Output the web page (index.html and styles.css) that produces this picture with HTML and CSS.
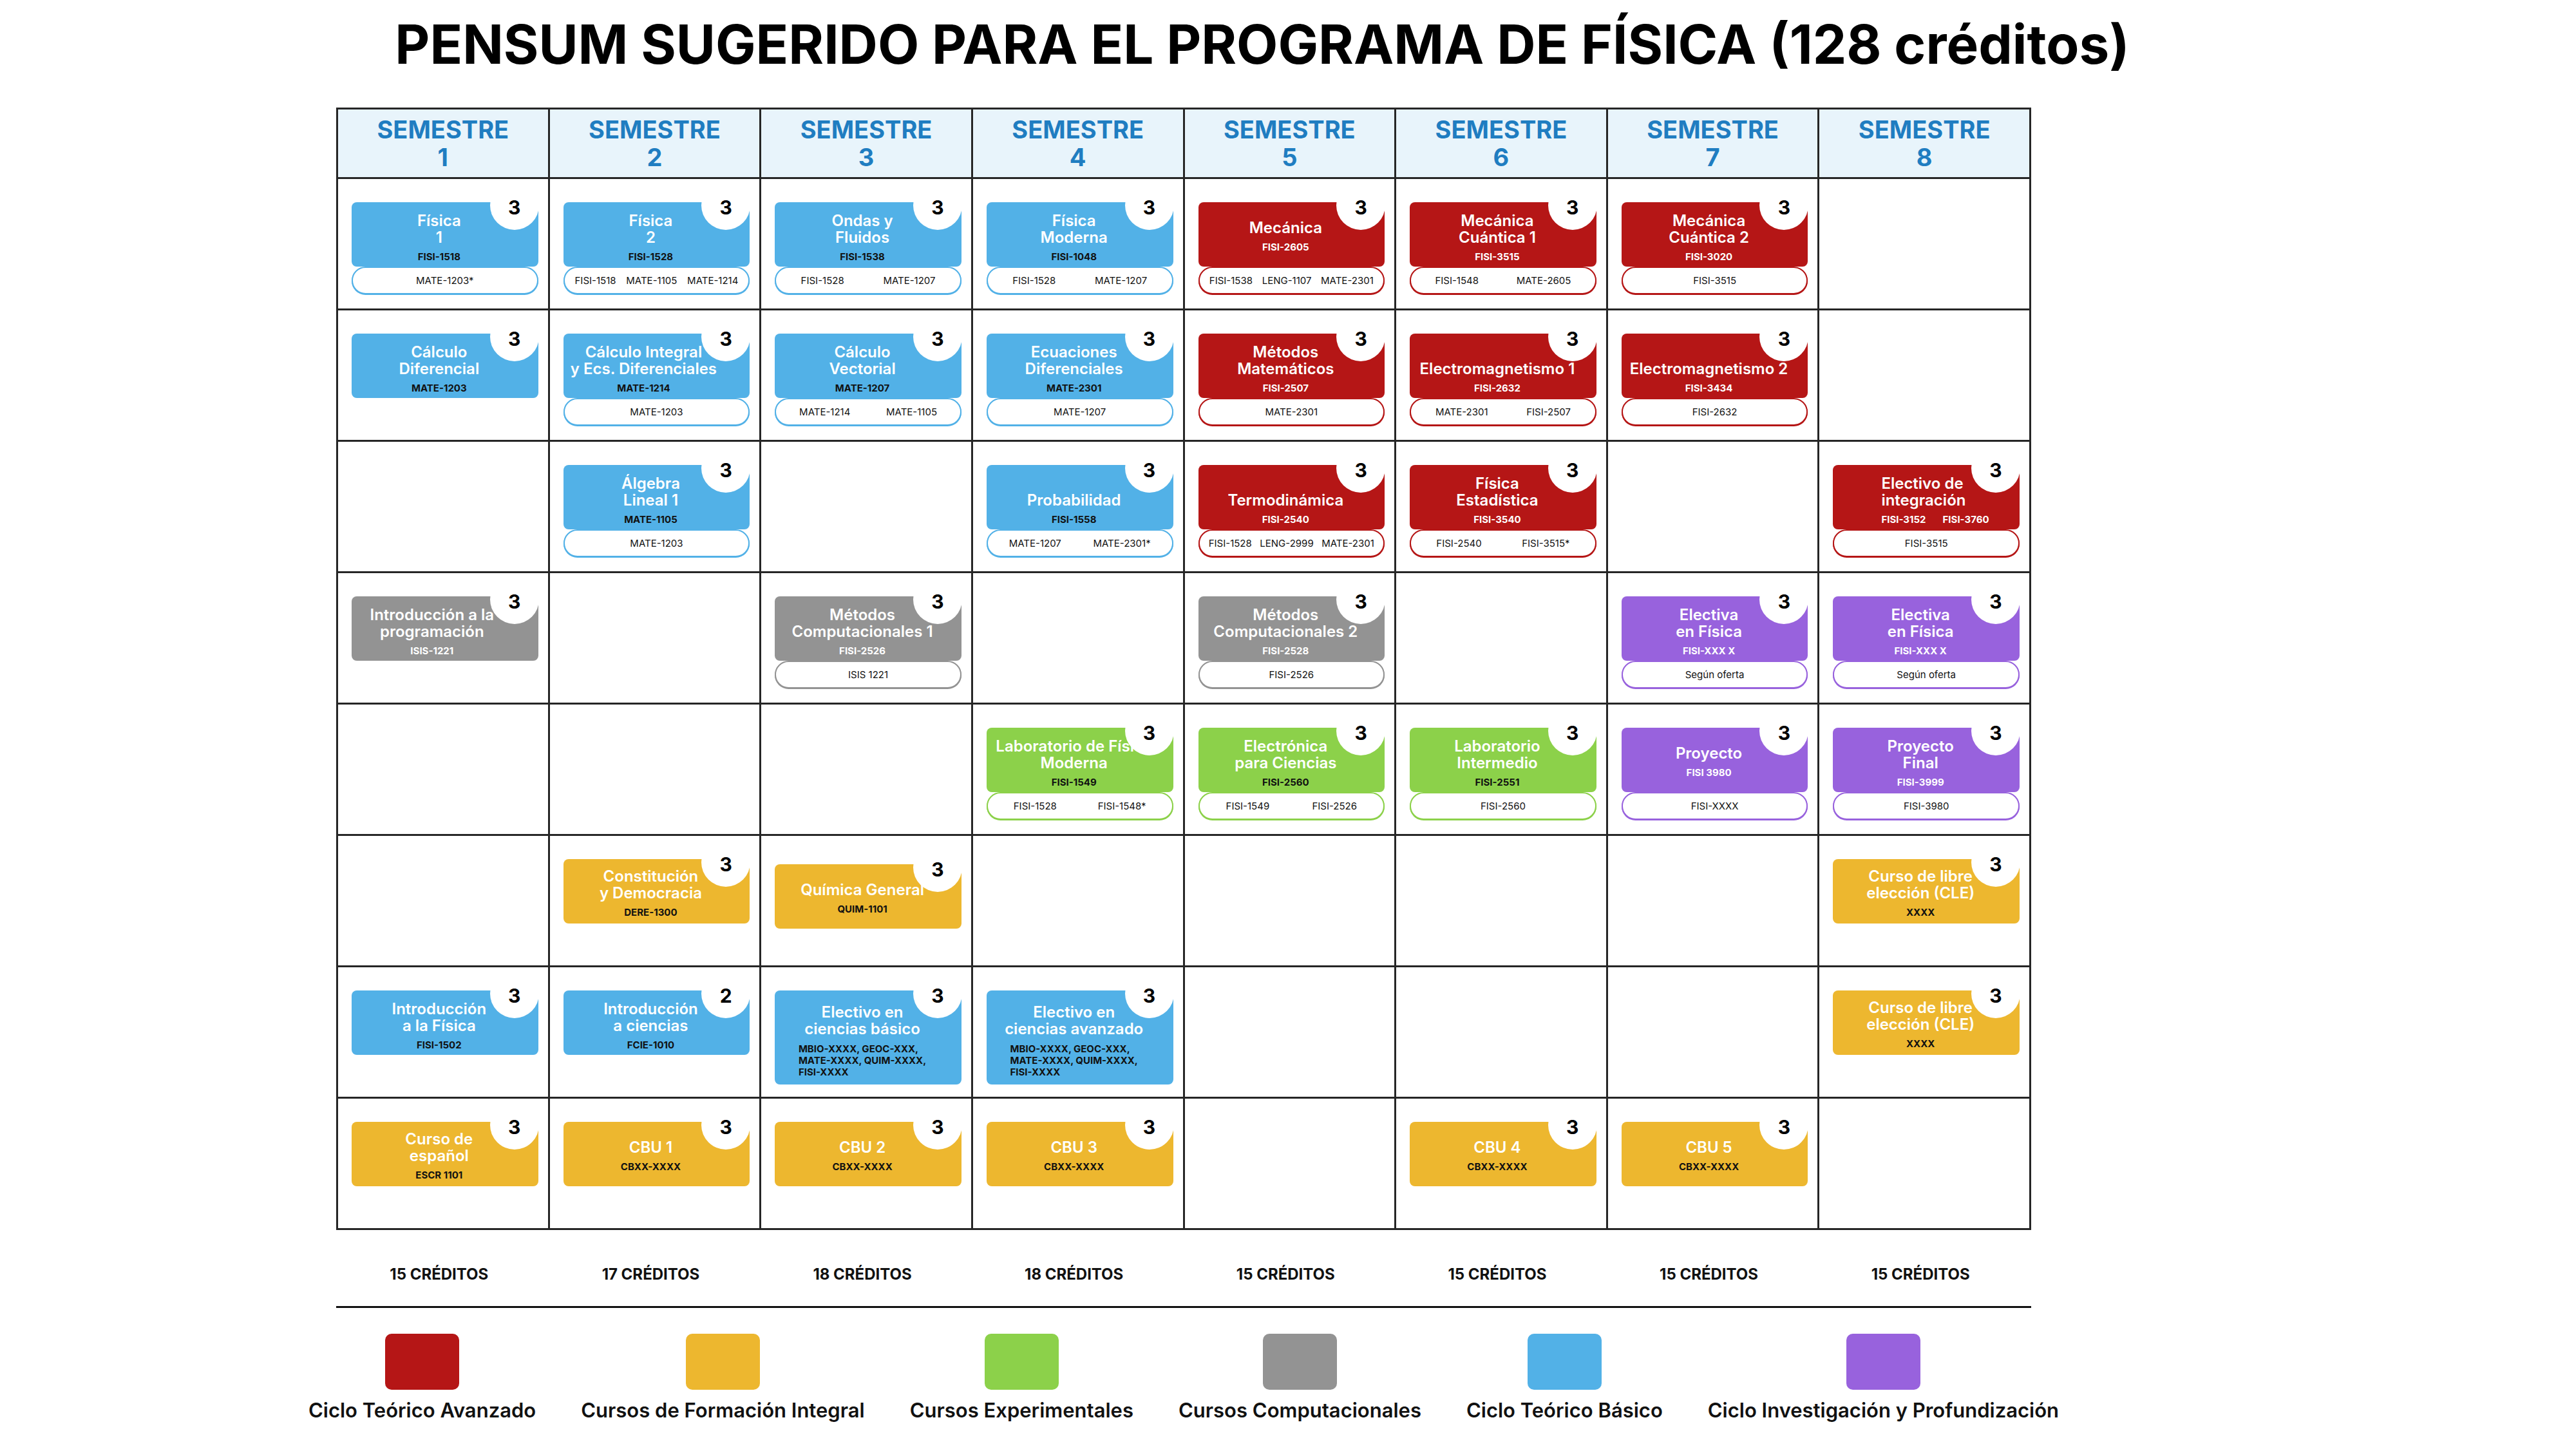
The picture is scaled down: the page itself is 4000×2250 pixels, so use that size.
FILE: index.html
```html
<!DOCTYPE html>
<html lang="es">
<head>
<meta charset="utf-8">
<title>Pensum sugerido para el programa de Física</title>
<link rel="stylesheet" href="styles.css">
</head>
<body>
<main class="page">
  <h1 class="title">PENSUM SUGERIDO PARA EL PROGRAMA DE FÍSICA (128 créditos)</h1>
  <section class="plan">
    <div class="grid">
      <div class="head">SEMESTRE<br>1</div>
      <div class="head">SEMESTRE<br>2</div>
      <div class="head">SEMESTRE<br>3</div>
      <div class="head">SEMESTRE<br>4</div>
      <div class="head">SEMESTRE<br>5</div>
      <div class="head">SEMESTRE<br>6</div>
      <div class="head">SEMESTRE<br>7</div>
      <div class="head">SEMESTRE<br>8</div>

      <!-- Row 1 -->
      <div class="cell"><div class="course course--blue"><div class="course__box"><span class="course__credits">3</span><p class="course__name">Física<br>1</p><p class="course__code">FISI-1518</p></div><div class="course__prereq"><span>MATE-1203*</span></div></div></div>
      <div class="cell"><div class="course course--blue"><div class="course__box"><span class="course__credits">3</span><p class="course__name">Física<br>2</p><p class="course__code">FISI-1528</p></div><div class="course__prereq"><span>FISI-1518</span><span>MATE-1105</span><span>MATE-1214</span></div></div></div>
      <div class="cell"><div class="course course--blue"><div class="course__box"><span class="course__credits">3</span><p class="course__name">Ondas y<br>Fluidos</p><p class="course__code">FISI-1538</p></div><div class="course__prereq"><span>FISI-1528</span><span>MATE-1207</span></div></div></div>
      <div class="cell"><div class="course course--blue"><div class="course__box"><span class="course__credits">3</span><p class="course__name">Física<br>Moderna</p><p class="course__code">FISI-1048</p></div><div class="course__prereq"><span>FISI-1528</span><span>MATE-1207</span></div></div></div>
      <div class="cell"><div class="course course--red course--mid"><div class="course__box"><span class="course__credits">3</span><p class="course__name">Mecánica</p><p class="course__code">FISI-2605</p></div><div class="course__prereq"><span>FISI-1538</span><span>LENG-1107</span><span>MATE-2301</span></div></div></div>
      <div class="cell"><div class="course course--red"><div class="course__box"><span class="course__credits">3</span><p class="course__name">Mecánica<br>Cuántica 1</p><p class="course__code">FISI-3515</p></div><div class="course__prereq"><span>FISI-1548</span><span>MATE-2605</span></div></div></div>
      <div class="cell"><div class="course course--red"><div class="course__box"><span class="course__credits">3</span><p class="course__name">Mecánica<br>Cuántica 2</p><p class="course__code">FISI-3020</p></div><div class="course__prereq"><span>FISI-3515</span></div></div></div>
      <div class="cell"></div>

      <!-- Row 2 -->
      <div class="cell"><div class="course course--blue"><div class="course__box"><span class="course__credits">3</span><p class="course__name">Cálculo<br>Diferencial</p><p class="course__code">MATE-1203</p></div></div></div>
      <div class="cell"><div class="course course--blue course--shift"><div class="course__box"><span class="course__credits">3</span><p class="course__name">Cálculo Integral<br>y Ecs. Diferenciales</p><p class="course__code">MATE-1214</p></div><div class="course__prereq"><span>MATE-1203</span></div></div></div>
      <div class="cell"><div class="course course--blue"><div class="course__box"><span class="course__credits">3</span><p class="course__name">Cálculo<br>Vectorial</p><p class="course__code">MATE-1207</p></div><div class="course__prereq"><span>MATE-1214</span><span>MATE-1105</span></div></div></div>
      <div class="cell"><div class="course course--blue"><div class="course__box"><span class="course__credits">3</span><p class="course__name">Ecuaciones<br>Diferenciales</p><p class="course__code">MATE-2301</p></div><div class="course__prereq"><span>MATE-1207</span></div></div></div>
      <div class="cell"><div class="course course--red"><div class="course__box"><span class="course__credits">3</span><p class="course__name">Métodos<br>Matemáticos</p><p class="course__code">FISI-2507</p></div><div class="course__prereq"><span>MATE-2301</span></div></div></div>
      <div class="cell"><div class="course course--red"><div class="course__box"><span class="course__credits">3</span><p class="course__name">Electromagnetismo 1</p><p class="course__code">FISI-2632</p></div><div class="course__prereq"><span>MATE-2301</span><span>FISI-2507</span></div></div></div>
      <div class="cell"><div class="course course--red"><div class="course__box"><span class="course__credits">3</span><p class="course__name">Electromagnetismo 2</p><p class="course__code">FISI-3434</p></div><div class="course__prereq"><span>FISI-2632</span></div></div></div>
      <div class="cell"></div>

      <!-- Row 3 -->
      <div class="cell"></div>
      <div class="cell"><div class="course course--blue"><div class="course__box"><span class="course__credits">3</span><p class="course__name">Álgebra<br>Lineal 1</p><p class="course__code">MATE-1105</p></div><div class="course__prereq"><span>MATE-1203</span></div></div></div>
      <div class="cell"></div>
      <div class="cell"><div class="course course--blue"><div class="course__box"><span class="course__credits">3</span><p class="course__name">Probabilidad</p><p class="course__code">FISI-1558</p></div><div class="course__prereq"><span>MATE-1207</span><span>MATE-2301*</span></div></div></div>
      <div class="cell"><div class="course course--red"><div class="course__box"><span class="course__credits">3</span><p class="course__name">Termodinámica</p><p class="course__code">FISI-2540</p></div><div class="course__prereq"><span>FISI-1528</span><span>LENG-2999</span><span>MATE-2301</span></div></div></div>
      <div class="cell"><div class="course course--red"><div class="course__box"><span class="course__credits">3</span><p class="course__name">Física<br>Estadística</p><p class="course__code">FISI-3540</p></div><div class="course__prereq"><span>FISI-2540</span><span>FISI-3515*</span></div></div></div>
      <div class="cell"></div>
      <div class="cell"><div class="course course--red course--left"><div class="course__box"><span class="course__credits">3</span><p class="course__name">Electivo de<br>integración</p><p class="course__code"><span>FISI-3152</span><span>FISI-3760</span></p></div><div class="course__prereq"><span>FISI-3515</span></div></div></div>

      <!-- Row 4 -->
      <div class="cell"><div class="course course--gray course--shift"><div class="course__box"><span class="course__credits">3</span><p class="course__name">Introducción a la<br>programación</p><p class="course__code">ISIS-1221</p></div></div></div>
      <div class="cell"></div>
      <div class="cell"><div class="course course--gray"><div class="course__box"><span class="course__credits">3</span><p class="course__name">Métodos<br>Computacionales 1</p><p class="course__code">FISI-2526</p></div><div class="course__prereq"><span>ISIS 1221</span></div></div></div>
      <div class="cell"></div>
      <div class="cell"><div class="course course--gray"><div class="course__box"><span class="course__credits">3</span><p class="course__name">Métodos<br>Computacionales 2</p><p class="course__code">FISI-2528</p></div><div class="course__prereq"><span>FISI-2526</span></div></div></div>
      <div class="cell"></div>
      <div class="cell"><div class="course course--purple"><div class="course__box"><span class="course__credits">3</span><p class="course__name">Electiva<br>en Física</p><p class="course__code">FISI-XXX X</p></div><div class="course__prereq"><span>Según oferta</span></div></div></div>
      <div class="cell"><div class="course course--purple"><div class="course__box"><span class="course__credits">3</span><p class="course__name">Electiva<br>en Física</p><p class="course__code">FISI-XXX X</p></div><div class="course__prereq"><span>Según oferta</span></div></div></div>

      <!-- Row 5 -->
      <div class="cell"></div>
      <div class="cell"></div>
      <div class="cell"></div>
      <div class="cell"><div class="course course--green"><div class="course__box"><span class="course__credits">3</span><p class="course__name">Laboratorio de Física<br>Moderna</p><p class="course__code">FISI-1549</p></div><div class="course__prereq"><span>FISI-1528</span><span>FISI-1548*</span></div></div></div>
      <div class="cell"><div class="course course--green"><div class="course__box"><span class="course__credits">3</span><p class="course__name">Electrónica<br>para Ciencias</p><p class="course__code">FISI-2560</p></div><div class="course__prereq"><span>FISI-1549</span><span>FISI-2526</span></div></div></div>
      <div class="cell"><div class="course course--green"><div class="course__box"><span class="course__credits">3</span><p class="course__name">Laboratorio<br>Intermedio</p><p class="course__code">FISI-2551</p></div><div class="course__prereq"><span>FISI-2560</span></div></div></div>
      <div class="cell"><div class="course course--purple course--mid"><div class="course__box"><span class="course__credits">3</span><p class="course__name">Proyecto</p><p class="course__code">FISI 3980</p></div><div class="course__prereq"><span>FISI-XXXX</span></div></div></div>
      <div class="cell"><div class="course course--purple"><div class="course__box"><span class="course__credits">3</span><p class="course__name">Proyecto<br>Final</p><p class="course__code">FISI-3999</p></div><div class="course__prereq"><span>FISI-3980</span></div></div></div>

      <!-- Row 6 -->
      <div class="cell"></div>
      <div class="cell"><div class="course course--yellow"><div class="course__box"><span class="course__credits">3</span><p class="course__name">Constitución<br>y Democracia</p><p class="course__code">DERE-1300</p></div></div></div>
      <div class="cell"><div class="course course--yellow course--low"><div class="course__box"><span class="course__credits">3</span><p class="course__name">Química General</p><p class="course__code">QUIM-1101</p></div></div></div>
      <div class="cell"></div>
      <div class="cell"></div>
      <div class="cell"></div>
      <div class="cell"></div>
      <div class="cell"><div class="course course--yellow"><div class="course__box"><span class="course__credits">3</span><p class="course__name">Curso de libre<br>elección (CLE)</p><p class="course__code">XXXX</p></div></div></div>

      <!-- Row 7 -->
      <div class="cell"><div class="course course--blue"><div class="course__box"><span class="course__credits">3</span><p class="course__name">Introducción<br>a la Física</p><p class="course__code">FISI-1502</p></div></div></div>
      <div class="cell"><div class="course course--blue"><div class="course__box"><span class="course__credits">2</span><p class="course__name">Introducción<br>a ciencias</p><p class="course__code">FCIE-1010</p></div></div></div>
      <div class="cell"><div class="course course--blue course--tall"><div class="course__box"><span class="course__credits">3</span><p class="course__name">Electivo en<br>ciencias básico</p><p class="course__code course__code--list">MBIO-XXXX, GEOC-XXX,<br>MATE-XXXX, QUIM-XXXX,<br>FISI-XXXX</p></div></div></div>
      <div class="cell"><div class="course course--blue course--tall"><div class="course__box"><span class="course__credits">3</span><p class="course__name">Electivo en<br>ciencias avanzado</p><p class="course__code course__code--list">MBIO-XXXX, GEOC-XXX,<br>MATE-XXXX, QUIM-XXXX,<br>FISI-XXXX</p></div></div></div>
      <div class="cell"></div>
      <div class="cell"></div>
      <div class="cell"></div>
      <div class="cell"><div class="course course--yellow"><div class="course__box"><span class="course__credits">3</span><p class="course__name">Curso de libre<br>elección (CLE)</p><p class="course__code">XXXX</p></div></div></div>

      <!-- Row 8 -->
      <div class="cell"><div class="course course--yellow"><div class="course__box"><span class="course__credits">3</span><p class="course__name">Curso de<br>español</p><p class="course__code">ESCR 1101</p></div></div></div>
      <div class="cell"><div class="course course--yellow"><div class="course__box"><span class="course__credits">3</span><p class="course__name">CBU 1</p><p class="course__code">CBXX-XXXX</p></div></div></div>
      <div class="cell"><div class="course course--yellow"><div class="course__box"><span class="course__credits">3</span><p class="course__name">CBU 2</p><p class="course__code">CBXX-XXXX</p></div></div></div>
      <div class="cell"><div class="course course--yellow"><div class="course__box"><span class="course__credits">3</span><p class="course__name">CBU 3</p><p class="course__code">CBXX-XXXX</p></div></div></div>
      <div class="cell"></div>
      <div class="cell"><div class="course course--yellow"><div class="course__box"><span class="course__credits">3</span><p class="course__name">CBU 4</p><p class="course__code">CBXX-XXXX</p></div></div></div>
      <div class="cell"><div class="course course--yellow"><div class="course__box"><span class="course__credits">3</span><p class="course__name">CBU 5</p><p class="course__code">CBXX-XXXX</p></div></div></div>
      <div class="cell"></div>
    </div>

    <div class="credits">
      <span>15 CRÉDITOS</span>
      <span>17 CRÉDITOS</span>
      <span>18 CRÉDITOS</span>
      <span>18 CRÉDITOS</span>
      <span>15 CRÉDITOS</span>
      <span>15 CRÉDITOS</span>
      <span>15 CRÉDITOS</span>
      <span>15 CRÉDITOS</span>
    </div>

    <hr class="rule">

    <ul class="legend">
      <li class="legend__item"><span class="swatch swatch--red"></span>Ciclo Teórico Avanzado</li>
      <li class="legend__item"><span class="swatch swatch--yellow"></span>Cursos de Formación Integral</li>
      <li class="legend__item"><span class="swatch swatch--green"></span>Cursos Experimentales</li>
      <li class="legend__item"><span class="swatch swatch--gray"></span>Cursos Computacionales</li>
      <li class="legend__item"><span class="swatch swatch--blue"></span>Ciclo Teórico Básico</li>
      <li class="legend__item"><span class="swatch swatch--purple"></span>Ciclo Investigación y Profundización</li>
    </ul>
  </section>
</main>
</body>
</html>
```

FILE: styles.css
```css
* {
  box-sizing: border-box;
}

html, body {
  margin: 0;
  padding: 0;
  background: #ffffff;
}

body {
  font-family: Inter, "Noto Sans", "DejaVu Sans", sans-serif;
  color: #111111;
}

.page {
  padding-top: 9px;
  width: 4000px;
  height: 2250px;
  overflow: hidden;
}

.title {
  margin: 0;
  width: 3920px;
  text-align: center;
  font-size: 83.5px;
  font-weight: 700;
  line-height: 120px;
  color: #000000;
}

.plan {
  margin-top: 38px;
  margin-left: 522px;
  width: 2632px;
}

/* ---------- grid ---------- */
.grid {
  display: grid;
  grid-template-columns: repeat(8, 1fr);
  grid-template-rows: 105px repeat(8, 201px);
  gap: 3px;
  padding: 3px;
  background: #262626;
}

.head {
  background: #e8f4fb;
  color: #1f7dc1;
  font-size: 38px;
  font-weight: 700;
  line-height: 43px;
  text-align: center;
  display: flex;
  align-items: center;
  justify-content: center;
}

.cell {
  background: #ffffff;
  padding: 36px 15px 0 21px;
}

/* ---------- course card ---------- */
.course {
  --c: #52b1e7;
  --code: #111111;
  display: flex;
  flex-direction: column;
}

.course--blue   { --c: #52b1e7; --code: #111111; }
.course--red    { --c: #b51616; --code: #ffffff; }
.course--gray   { --c: #939393; --code: #ffffff; }
.course--green  { --c: #8cd14a; --code: #111111; }
.course--purple { --c: #9862dd; --code: #ffffff; }
.course--yellow { --c: #edb72f; --code: #111111; }

.course--low {
  margin-top: 8px;
}

.course__box {
  position: relative;
  height: 100px;
  border-radius: 8px;
  background: var(--c);
  display: flex;
  flex-direction: column;
  align-items: center;
  justify-content: flex-end;
  padding: 8px 18px 5px 0;
}

.course--yellow .course__box,
.course--mid .course__box {
  justify-content: center;
  padding: 10px 18px 4px 0;
}

.course--shift .course__box {
  padding-right: 40px;
}

.course__credits {
  position: absolute;
  top: -33px;
  right: -1px;
  width: 76px;
  height: 76px;
  border-radius: 50%;
  background: #ffffff;
  color: #000000;
  font-size: 30px;
  font-weight: 700;
  display: flex;
  align-items: center;
  justify-content: center;
  padding-top: 5px;
  z-index: 2;
}

.course__name {
  margin: 0;
  text-align: center;
  color: #ffffff;
  font-size: 24px;
  font-weight: 600;
  line-height: 26px;
  white-space: nowrap;
}

.course__code {
  margin: 7px 0 0;
  color: var(--code);
  font-size: 15px;
  font-weight: 700;
  line-height: 20px;
  white-space: nowrap;
  display: flex;
  gap: 26px;
}

.course--left .course__box {
  align-items: flex-start;
  padding-left: 75px;
}

.course--left .course__name {
  text-align: left;
}

.course--tall .course__box {
  height: 146px;
  padding-bottom: 10px;
}

.course--tall .course__code {
  margin-top: 9px;
}

.course__code--list {
  display: block;
  text-align: left;
  line-height: 18px;
}

.course__prereq {
  height: 43px;
  border: 2.5px solid var(--c);
  border-radius: 22px;
  background: #ffffff;
  display: flex;
  align-items: center;
  justify-content: space-around;
  padding: 0 8px;
  font-size: 15px;
  font-weight: 400;
  color: #111111;
  white-space: nowrap;
  box-shadow: 0 1px 0 var(--c);
}

/* ---------- credits ---------- */
.credits {
  display: grid;
  grid-template-columns: repeat(8, 1fr);
  gap: 3px;
  padding: 18px 3px 0;
  height: 118px;
  align-items: center;
  justify-items: center;
  font-size: 24px;
  font-weight: 700;
  color: #111111;
}

.credits span {
  margin-right: 12px;
}

.rule {
  margin: 0;
  border: 0;
  height: 3px;
  background: #111111;
}

/* ---------- legend ---------- */
.legend {
  list-style: none;
  margin: 40px 0 0;
  padding: 0;
  display: flex;
  justify-content: center;
  gap: 70px;
}

.legend__item {
  display: flex;
  flex-direction: column;
  align-items: center;
  gap: 13px;
  font-size: 31px;
  font-weight: 600;
  line-height: 38px;
  color: #111111;
  white-space: nowrap;
}

.swatch {
  display: block;
  width: 115px;
  height: 87px;
  border-radius: 10px;
}

.swatch--red    { background: #b51616; }
.swatch--yellow { background: #edb72f; }
.swatch--green  { background: #8cd14a; }
.swatch--gray   { background: #939393; }
.swatch--blue   { background: #52b1e7; }
.swatch--purple { background: #9862dd; }
```
